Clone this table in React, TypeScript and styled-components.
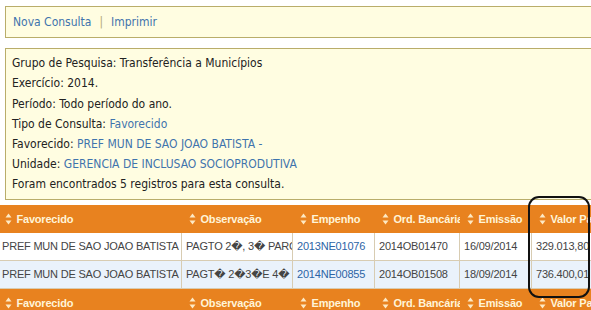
import React from 'react'
import styled, { createGlobalStyle } from 'styled-components'

const GlobalStyle = createGlobalStyle`
    html, body {
        margin: 0;
        padding: 0;
        background: #ffffff;
        overflow: hidden;
    }
`

const Page = styled.div`
    position: relative;
    width: 591px;
    height: 310px;
    overflow: hidden;
    padding-top: 6px;
    box-sizing: border-box;
`

const Box = styled.div<{ $compact?: boolean }>`
    margin-left: 5px;
    width: 640px;
    box-sizing: border-box;
    background: #fffde1;
    border: 1px solid #b9ad6a;
    padding: ${props => (props.$compact ? '5px 7px 5px' : '4px 6px 4px')};
    margin-bottom: ${props => (props.$compact ? '10px' : '5px')};
    font-family: "DejaVu Sans Condensed", "DejaVu Sans", sans-serif;
    font-size: 12px;
    color: #222222;
`

const Line = styled.div`
    line-height: 20.2px;
    white-space: nowrap;
`

const Link = styled.span`
    color: #3f74ad;
`

const Sep = styled.span`
    color: #b3a86e;
    margin: 0 8px;
`

const Table = styled.table`
    margin-left: -3px;
    border-collapse: collapse;
    table-layout: fixed;
    width: 630px;
    font-family: "Liberation Sans", Arial, "DejaVu Sans", sans-serif;
    font-size: 11px;
    letter-spacing: -0.2px;
`

const HeadCell = styled.th`
    background: #e8821f;
    color: #fff4d8;
    font-weight: bold;
    text-align: left;
    height: 28px;
    padding: 0 0 0 7px;
    white-space: nowrap;
    overflow: hidden;
    border: none;
`

const SortIcon = styled.svg`
    width: 7px;
    height: 12px;
    vertical-align: -2px;
    margin-right: 5px;
`

const Row = styled.tr<{ $alt?: boolean }>`
    background: ${props => (props.$alt ? '#eaf2fb' : '#ffffff')};
`

const Cell = styled.td<{ $link?: boolean }>`
    height: 27px;
    padding: 0 0 0 4px;
    color: ${props => (props.$link ? '#2c64a6' : '#444444')};
    white-space: nowrap;
    overflow: hidden;
    border: 1px solid #d8ccb2;
    border-top: none;
`

const Highlight = styled.div`
    position: absolute;
    left: 528px;
    top: 196px;
    width: 62px;
    height: 102px;
    box-sizing: border-box;
    border: 2.5px solid #111111;
    border-radius: 11px;
`

const columns = [
    { title: 'Favorecido', width: 184 },
    { title: 'Observação', width: 111 },
    { title: 'Empenho', width: 82 },
    { title: 'Ord. Bancária', width: 85 },
    { title: 'Emissão', width: 72 },
    { title: 'Valor Pago', width: 96 },
]

const rows = [
    ['PREF MUN DE SAO JOAO BATISTA', 'PAGTO 2\uFFFD, 3\uFFFD PARCELA', '2013NE01076', '2014OB01470', '16/09/2014', '329.013,80'],
    ['PREF MUN DE SAO JOAO BATISTA', 'PAGT\uFFFD 2\uFFFD3\uFFFDE 4\uFFFD', '2014NE00855', '2014OB01508', '18/09/2014', '736.400,01'],
]

const Sort = () => (
    <SortIcon viewBox="0 0 7 12">
        <path d="M3.5 0.5 L6.5 4.5 L0.5 4.5 Z" fill="#fde9c4" />
        <path d="M0.5 7.5 L6.5 7.5 L3.5 11.5 Z" fill="#fde9c4" />
    </SortIcon>
)

const HeaderRow = () => (
    <tr>
        {columns.map(c => (
            <HeadCell key={c.title}>
                <Sort />
                {c.title}
            </HeadCell>
        ))}
    </tr>
)

const App: React.FC = () => {
    return (
        <Page>
            <GlobalStyle />
            <Box $compact>
                <Line>
                    <Link>Nova Consulta</Link>
                    <Sep>|</Sep>
                    <Link>Imprimir</Link>
                </Line>
            </Box>
            <Box>
                <Line>Grupo de Pesquisa: Transferência a Municípios</Line>
                <Line>Exercício: 2014.</Line>
                <Line>Período: Todo período do ano.</Line>
                <Line>Tipo de Consulta: <Link>Favorecido</Link></Line>
                <Line>Favorecido: <Link>PREF MUN DE SAO JOAO BATISTA -</Link></Line>
                <Line>Unidade: <Link>GERENCIA DE INCLUSAO SOCIOPRODUTIVA</Link></Line>
                <Line>Foram encontrados 5 registros para esta consulta.</Line>
            </Box>
            <Table>
                <colgroup>
                    {columns.map(c => (
                        <col key={c.title} style={{ width: c.width }} />
                    ))}
                </colgroup>
                <thead>
                    <HeaderRow />
                </thead>
                <tbody>
                    {rows.map((r, i) => (
                        <Row key={i} $alt={i % 2 === 1}>
                            {r.map((v, j) => (
                                <Cell key={j} $link={j === 2}>{v}</Cell>
                            ))}
                        </Row>
                    ))}
                </tbody>
                <tfoot>
                    <HeaderRow />
                </tfoot>
            </Table>
            <Highlight />
        </Page>
    )
}

export default App
